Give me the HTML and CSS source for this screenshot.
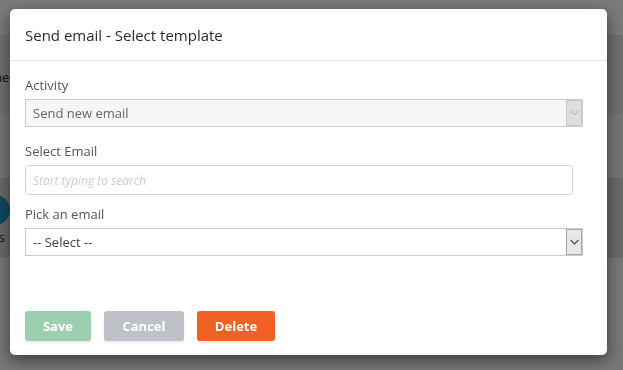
FILE: index.html
```html
<!DOCTYPE html>
<html lang="en">
<head>
    <meta charset="UTF-8">
    <meta name="viewport" content="width=device-width, initial-scale=1.0">
    <title>Send email - Select template</title>
    <link rel="stylesheet" href="styles.css">
</head>
<body>
    <div class="page">
        <div class="band band-top"></div>
        <div class="band band-name"><span class="cell-text">Name</span></div>
        <div class="band band-mid"></div>
        <div class="band band-row">
            <div class="row-icon"></div>
            <span class="cell-text small">Save s</span>
        </div>
        <div class="band band-bottom"></div>
    </div>

    <div class="overlay">
        <div class="modal">
            <div class="modal-header">
                <h4>Send email - Select template</h4>
            </div>

            <div class="modal-body">
                <div class="form-group">
                    <label>Activity</label>
                    <div class="select disabled">
                        <span>Send new email</span>
                        <span class="select-arrow">
                            <svg width="9" height="6" viewBox="0 0 9 6"><path d="M0.5 0.8 L4.5 4.8 L8.5 0.8" fill="none" stroke="currentColor" stroke-width="1"/></svg>
                        </span>
                    </div>
                </div>

                <div class="form-group">
                    <label>Select Email</label>
                    <input type="text" class="search" placeholder="Start typing to search">
                </div>

                <div class="form-group">
                    <label>Pick an email</label>
                    <div class="select">
                        <span>-- Select --</span>
                        <span class="select-arrow">
                            <svg width="9" height="6" viewBox="0 0 9 6"><path d="M0.5 0.8 L4.5 4.8 L8.5 0.8" fill="none" stroke="currentColor" stroke-width="1.2"/></svg>
                        </span>
                    </div>
                </div>
            </div>

            <div class="modal-footer">
                <button class="btn btn-save">Save</button>
                <button class="btn btn-cancel">Cancel</button>
                <button class="btn btn-delete">Delete</button>
            </div>
        </div>
    </div>
</body>
</html>
```

FILE: styles.css
```css
body {
    margin: 0;
    font-family: "Open Sans", Arial, sans-serif;
    background: #eeeeee;
    overflow: hidden;
}

/* page behind the dialog */
.page {
    height: 370px;
    display: flex;
    flex-direction: column;
}
.band {
    display: flex;
    align-items: center;
    overflow: hidden;
}
.band-top { height: 35px; background: #f4f4f4; }
.band-name {
    height: 78px;
    background: #dcdcdc;
    padding-top: 6px;
    box-sizing: border-box;
}
.band-mid { height: 65px; background: #ebebeb; }
.band-row {
    height: 80px;
    background: #d2d2d2;
    flex-direction: column;
    align-items: flex-start;
    padding-top: 17px;
    box-sizing: border-box;
}
.band-bottom { flex: 1; background: #eeeeee; }

.cell-text {
    font-size: 13px;
    color: #222;
    margin-left: -27px;
}
.cell-text.small {
    font-size: 12px;
    margin-left: -30px;
    margin-top: 4px;
}
.row-icon {
    width: 30px;
    height: 30px;
    margin-left: -20px;
    border-radius: 50%;
    background: #1f8fc4;
}

/* dialog */
.overlay {
    position: fixed;
    inset: 0;
    background: rgba(0, 0, 0, 0.5);
    padding: 9px 0 0 10px;
}
.modal {
    width: 597px;
    height: 346px;
    background: #fff;
    border-radius: 5px;
    box-shadow: 0 5px 15px rgba(0, 0, 0, 0.5);
    display: flex;
    flex-direction: column;
}
.modal-header {
    padding: 16px 15px 15px;
    border-bottom: 1px solid #e5e5e5;
}
.modal-header h4 {
    margin: 0;
    font-size: 15px;
    font-weight: normal;
    line-height: 20px;
    color: #2b2b2b;
}

.modal-body {
    padding: 15px 24px 0 15px;
}
.form-group {
    margin-bottom: 10px;
}
.form-group:first-child {
    margin-bottom: 15px;
}
label {
    display: block;
    font-size: 13px;
    line-height: 18px;
    color: #555;
    margin-bottom: 5px;
}

.select {
    height: 28px;
    box-sizing: border-box;
    border: 1px solid #cccccc;
    background: #fff;
    display: flex;
    align-items: center;
    justify-content: space-between;
    font-size: 13px;
    color: #444;
    padding-left: 7px;
}
.select.disabled {
    background: #f6f6f6;
    color: #666;
}
.select-arrow {
    width: 16px;
    height: 26px;
    box-sizing: border-box;
    border: 1px solid #a8a8a8;
    background: #e8e8e8;
    display: flex;
    align-items: center;
    justify-content: center;
    color: #444;
}
.select.disabled .select-arrow {
    border-color: #c8c8c8;
    background: #dedede;
    color: #aaa;
}

.search {
    display: block;
    width: 548px;
    height: 30px;
    box-sizing: border-box;
    border: 1px solid #d4d4d4;
    border-radius: 4px;
    padding: 0 7px;
    font-family: "Open Sans", Arial, sans-serif;
    font-size: 12px;
    outline: none;
}
.search::placeholder {
    color: #cccccc;
    font-style: italic;
}

.modal-footer {
    margin-top: auto;
    padding: 0 15px 14px;
    display: flex;
    gap: 13px;
}
.btn {
    height: 30px;
    border: none;
    border-radius: 3px;
    color: #fff;
    font-family: "Open Sans", Arial, sans-serif;
    font-size: 13px;
    font-weight: bold;
    box-shadow: 0 2px 2px rgba(0, 0, 0, 0.08);
    cursor: pointer;
}
.btn-save { width: 66px; background: #9ccfad; }
.btn-cancel { width: 80px; background: #bfc1c8; }
.btn-delete { width: 78px; background: #f26124; }
```
